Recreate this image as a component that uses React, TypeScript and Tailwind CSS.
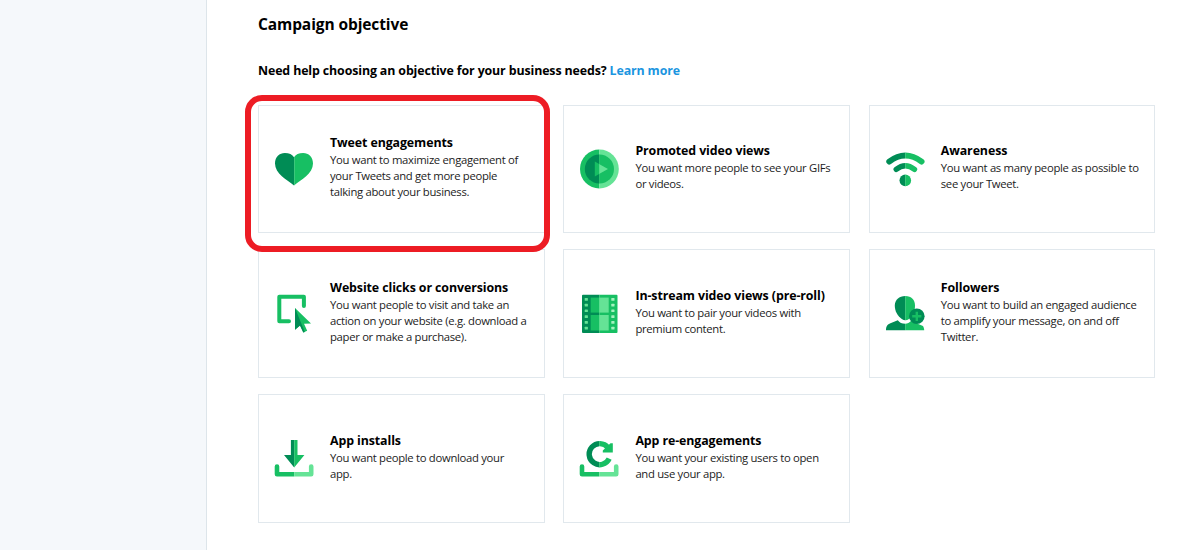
import type { ReactNode } from 'react';

const DARK = '#008c55';
const MID = '#17bf63';
const LIGHT = '#65e396';

interface Objective {
  title: string;
  lines: string[];
  icon: ReactNode;
}

// Left half of an icon is drawn in one shade and the right half in another
function Halves({ id, left, right, children }: { id: string; left: string; right: string; children: ReactNode }) {
  return (
    <>
      <clipPath id={`${id}-l`}>
        <rect x="0" y="0" width="29.2" height="60" />
      </clipPath>
      <clipPath id={`${id}-r`}>
        <rect x="29.2" y="0" width="31" height="60" />
      </clipPath>
      <g clipPath={`url(#${id}-l)`} fill={left} stroke={left} strokeWidth="0">
        {children}
      </g>
      <g clipPath={`url(#${id}-r)`} fill={right} stroke={right} strokeWidth="0">
        {children}
      </g>
    </>
  );
}

const heart = (
  <Halves id="heart" left={DARK} right={MID}>
    <path d="M29 45.4C22 40 10 33.5 10 23.5C10 17 14.5 13 19.8 13C24 13 27.5 14.5 29 17.3C30.5 14.5 34 13 38.2 13C43.5 13 48 17 48 23.5C48 33.5 36 40 29 45.4Z" />
  </Halves>
);

const play = (
  <>
    <Halves id="ring" left={MID} right={LIGHT}>
      <circle cx="29.4" cy="29" r="19.4" />
    </Halves>
    <Halves id="disc" left={DARK} right={MID}>
      <circle cx="29.4" cy="29" r="14.6" />
    </Halves>
    <Halves id="tri" left={MID} right={LIGHT}>
      <path d="M24.8 21.5L38 29L24.8 36.5Z" />
    </Halves>
  </>
);

const wifi = (
  <Halves id="wifi" left={DARK} right={MID}>
    <path d="M13.2 21.6Q29.3 9.4 45.6 21.6" fill="none" strokeWidth="5.8" strokeLinecap="round" />
    <path d="M20.2 29.4Q29.3 22.2 38.5 29.4" fill="none" strokeWidth="5.4" strokeLinecap="round" />
    <circle cx="29.3" cy="40.4" r="5.8" />
  </Halves>
);

const click = (
  <>
    <path d="M24 36.2H14.3V11.8H38.9V21" fill="none" stroke={MID} strokeWidth="4" strokeLinecap="round" strokeLinejoin="round" />
    <path d="M30 23L46 38.4L39 38.8L42.2 45.7L38.3 47.6L35 40.5L30 44.7Z" fill={MID} />
    <path d="M30 23L39.8 46.9L38.3 47.6L35 40.5L30 44.7Z" fill={DARK} />
  </>
);

const holes = [13, 18.7, 24.4, 30.2, 36, 41.8];

const film = (
  <>
    <Halves id="film" left={DARK} right={MID}>
      <rect x="12" y="9.8" width="35.5" height="38.2" rx="1" />
    </Halves>
    <Halves id="frame" left={MID} right={LIGHT}>
      <rect x="20.7" y="12.6" width="18" height="15" />
      <rect x="20.7" y="30" width="18" height="15.5" />
    </Halves>
    {holes.map((y) => (
      <g key={y}>
        <rect x="14.7" y={y} width="3.2" height="2.7" rx="0.5" fill={LIGHT} />
        <rect x="41.3" y={y} width="3.2" height="2.7" rx="0.5" fill="#a5f2bf" />
      </g>
    ))}
  </>
);

const followers = (
  <>
    <Halves id="person" left={DARK} right={MID}>
      <path d="M29.3 11C35.5 11 39 15 39 20.5C39 26 37 31 33 34Q29.3 36.4 25.8 34C21.6 31 18.9 26.5 18.8 20.8C18.7 15 23 11 29.3 11Z" />
      <path d="M10 45.3C10 40.5 12 39 15 38L21.8 35.2C23.5 37.6 26 38.7 29.3 38.7C31.5 38.7 33.5 37.5 35 36L47 41C48 43 48.2 44 48.2 45.3Z" />
    </Halves>
    <circle cx="40.8" cy="31.3" r="7.8" fill={DARK} />
    <path d="M40.8 26.7V35.9M36.2 31.3H45.4" stroke={MID} strokeWidth="2.4" />
  </>
);

const tray = (
  <Halves id="tray" left={MID} right={LIGHT}>
    <path d="M12 36.5V44.3H46.2V36.5" fill="none" strokeWidth="4.6" strokeLinecap="round" strokeLinejoin="round" />
  </Halves>
);

const install = (
  <>
    <Halves id="arrow" left={DARK} right={MID}>
      <path d="M25.9 10H32.5V25H39.4L29.2 37.5L19 25H25.9Z" />
    </Halves>
    {tray}
  </>
);

const reengage = (
  <>
    <Halves id="reload" left={DARK} right={MID}>
      <path d="M39.2 28.6A10.5 10.5 0 1 1 37.9 17.6" fill="none" strokeWidth="5.4" />
      <path d="M40.5 13.2H42.8V22.6H32.8V20.6Z" />
    </Halves>
    {tray}
  </>
);

const objectives: Objective[] = [
  {
    title: 'Tweet engagements',
    lines: ['You want to maximize engagement of', 'your Tweets and get more people', 'talking about your business.'],
    icon: heart,
  },
  { title: 'Promoted video views', lines: ['You want more people to see your GIFs', 'or videos.'], icon: play },
  { title: 'Awareness', lines: ['You want as many people as possible to', 'see your Tweet.'], icon: wifi },
  {
    title: 'Website clicks or conversions',
    lines: ['You want people to visit and take an', 'action on your website (e.g. download a', 'paper or make a purchase).'],
    icon: click,
  },
  { title: 'In-stream video views (pre-roll)', lines: ['You want to pair your videos with', 'premium content.'], icon: film },
  {
    title: 'Followers',
    lines: ['You want to build an engaged audience', 'to amplify your message, on and off', 'Twitter.'],
    icon: followers,
  },
  { title: 'App installs', lines: ['You want people to download your', 'app.'], icon: install },
  { title: 'App re-engagements', lines: ['You want your existing users to open', 'and use your app.'], icon: reengage },
];

function ObjectiveCard({ objective, selected }: { objective: Objective; selected: boolean }) {
  return (
    <div className="relative flex items-center border border-[#e1e8ed] bg-white pl-[15px]">
      <svg className="h-10 w-10 shrink-0" viewBox="9 9 40 40">
        {objective.icon}
      </svg>
      <div className="ml-4 pb-[5px] whitespace-nowrap">
        <h3 className="text-[12.4px] leading-[19px] font-bold tracking-[-0.1px] text-black">{objective.title}</h3>
        {objective.lines.map((line) => (
          <p key={line} className="text-[11.3px] leading-4 tracking-[-0.31px] text-[#1c1c1c]">
            {line}
          </p>
        ))}
      </div>
      {selected && (
        <div className="absolute -top-[10.6px] -left-[14px] z-10 h-[157px] w-[305px] rounded-[17px] border-[6px] border-[#ed1c24]" />
      )}
    </div>
  );
}

export default function App() {
  return (
    <div className="flex h-[550px] w-[1200px] overflow-hidden bg-white font-['Open_Sans','Noto_Sans',sans-serif] text-black">
      <aside className="w-[207px] shrink-0 border-r border-[#dde5ea] bg-[#f5f8fb]" />
      <main className="pt-3 pl-[51px]">
        <h1 className="text-[15.5px] leading-6 font-bold tracking-[-0.1px] whitespace-nowrap">Campaign objective</h1>
        <p className="mt-[25px] text-[12.4px] leading-5 font-bold tracking-[-0.125px] whitespace-nowrap">
          Need help choosing an objective for your business needs?{' '}
          <a className="text-[#1b95e0]" href="#">
            Learn more
          </a>
        </p>
        <div className="mt-[23.6px] grid grid-cols-[repeat(3,286.6px)] grid-rows-[repeat(3,128.8px)] gap-x-[18.8px] gap-y-4">
          {objectives.map((objective, i) => (
            <ObjectiveCard key={objective.title} objective={objective} selected={i === 0} />
          ))}
        </div>
      </main>
    </div>
  );
}
